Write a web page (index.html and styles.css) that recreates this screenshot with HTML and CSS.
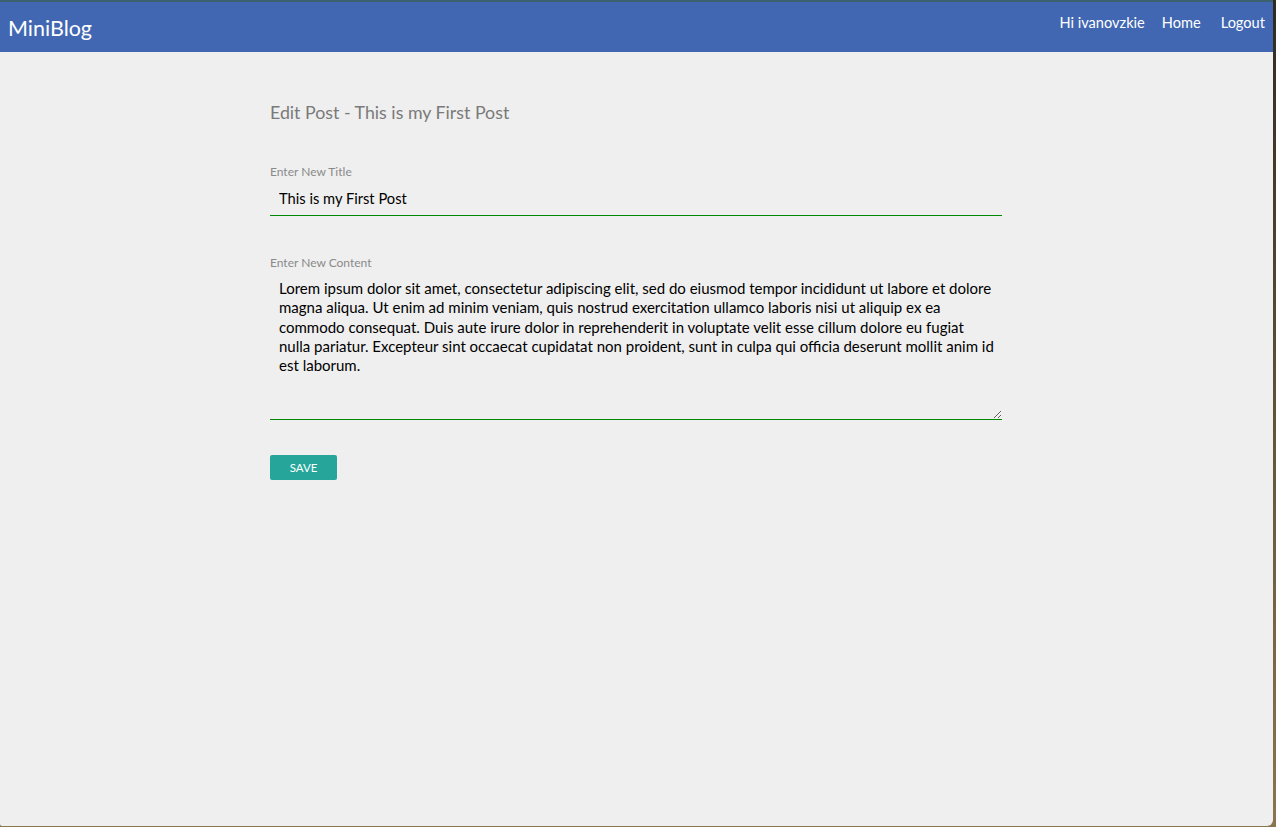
FILE: index.html
```html
<!DOCTYPE html>
<html>
<head>
<meta charset="utf-8">
<title>MiniBlog</title>
<link rel="stylesheet" href="styles.css">
</head>
<body>
<div class="window">
  <nav class="navbar">
    <a class="brand" href="#">MiniBlog</a>
    <ul class="nav-links">
      <li><a href="#">Hi ivanovzkie</a></li>
      <li><a href="#">Home</a></li>
      <li><a href="#">Logout</a></li>
    </ul>
  </nav>
  <main class="container">
    <h4 class="page-title">Edit Post - This is my First Post</h4>
    <form class="edit-form">
      <div class="field">
        <label class="field-label" for="title">Enter New Title</label>
        <input id="title" class="field-input" type="text" value="This is my First Post">
      </div>
      <div class="field field-content">
        <label class="field-label" for="content">Enter New Content</label>
        <textarea id="content" class="field-textarea">Lorem ipsum dolor sit amet, consectetur adipiscing elit, sed do eiusmod tempor incididunt ut labore et dolore magna aliqua. Ut enim ad minim veniam, quis nostrud exercitation ullamco laboris nisi ut aliquip ex ea commodo consequat. Duis aute irure dolor in reprehenderit in voluptate velit esse cillum dolore eu fugiat nulla pariatur. Excepteur sint occaecat cupidatat non proident, sunt in culpa qui officia deserunt mollit anim id est laborum.</textarea>
      </div>
      <button class="btn-save" type="button">SAVE</button>
    </form>
  </main>
</div>
</body>
</html>
```
FILE: styles.css
```css
html, body {
  margin: 0;
  padding: 0;
  height: 100%;
}
body {
  background: linear-gradient(180deg, #2f2a22 0%, #6b5a3e 60%, #8a7550 100%);
  font-family: "Lato", "Open Sans", sans-serif;
  overflow: hidden;
}
.window {
  width: 1273px;
  height: 826px;
  background: #efefef;
  border-bottom-right-radius: 6px;
  border-bottom-left-radius: 2px;
  overflow: hidden;
}
.navbar {
  background: #4167b2;
  border-top: 2px solid #3b6070;
  display: flex;
  align-items: center;
  justify-content: space-between;
  padding: 0 8px;
  box-sizing: border-box;
  height: 52px;
}
.brand {
  color: #fff;
  text-decoration: none;
  font-size: 21.5px;
  margin-top: 1px;
}
.nav-links {
  list-style: none;
  margin: -11px 0 0 0;
  padding: 0;
  display: flex;
  gap: 17px;
}
.nav-links li:last-child {
  margin-left: 3px;
}
.nav-links a {
  color: #fff;
  text-decoration: none;
  font-size: 14.6px;
}
.container {
  width: 732px;
  margin-left: 270px;
  padding-top: 50px;
}
.page-title {
  margin: 0;
  font-weight: normal;
  font-size: 17.8px;
  color: #7a7a7a;
  line-height: 20px;
}
.edit-form {
  margin-top: 43px;
}
.field {
  display: flex;
  flex-direction: column;
}
.field-label {
  font-size: 12px;
  color: #8a8a8a;
  line-height: 14px;
}
.field-input {
  margin-top: 5px;
  border: 0;
  border-bottom: 1px solid #008800;
  background: transparent;
  font-family: inherit;
  font-size: 14.7px;
  color: #000;
  padding: 5px 8px 8px 9px;
  outline: none;
}
.field-content {
  margin-top: 40px;
}
.field-textarea {
  margin-top: 2px;
  height: 148px;
  box-sizing: border-box;
  border: 0;
  border-bottom: 1px solid #008800;
  background: transparent;
  font-family: inherit;
  font-size: 15px;
  line-height: 19.3px;
  color: #000;
  padding: 7px 5px 2px 9px;
  outline: none;
  resize: vertical;
}
.btn-save {
  margin-top: 35px;
  width: 67px;
  height: 25px;
  background: #26a69a;
  color: #fff;
  border: none;
  border-radius: 2px;
  font-family: inherit;
  font-size: 11.5px;
  padding: 0;
}
```
